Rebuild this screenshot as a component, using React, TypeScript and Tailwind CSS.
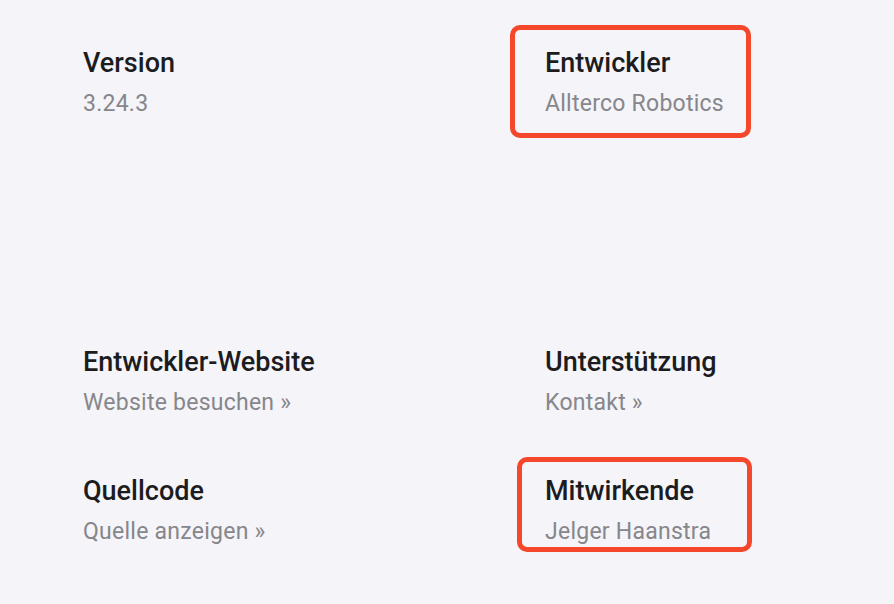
const Item = ({
  title,
  value,
  box,
}: {
  title: string;
  value: string;
  box?: string;
}) => (
  <div className="relative">
    {box && <span className={`absolute rounded-[10px] border-[5px] border-[#f4472b] ${box}`} />}
    <div className="text-[27px] leading-[32px] font-medium text-[#1c1c1e]">{title}</div>
    <div className="mt-[11px] text-[23px] leading-[28px] tracking-[0.25px] text-[#86868b]">{value}</div>
  </div>
);

export default function App() {
  return (
    <div
      className="min-h-[604px] w-[894px] bg-[#f4f4f9] pl-[83px] pt-[47px]"
      style={{ fontFamily: "Roboto, 'Noto Sans', sans-serif" }}
    >
      <div className="grid grid-cols-[462px_1fr]">
        <Item title="Version" value="3.24.3" />
        <Item
          title="Entwickler"
          value="Allterco Robotics"
          box="-left-[35px] -top-[22px] w-[241px] h-[113px]"
        />
      </div>
      <div className="mt-[228px] grid grid-cols-[462px_1fr] gap-y-[58px]">
        <Item title="Entwickler-Website" value="Website besuchen »" />
        <Item title="Unterstützung" value="Kontakt »" />
        <Item title="Quellcode" value="Quelle anzeigen »" />
        <Item
          title="Mitwirkende"
          value="Jelger Haanstra"
          box="-left-[28px] -top-[18px] w-[235px] h-[95px]"
        />
      </div>
    </div>
  );
}
